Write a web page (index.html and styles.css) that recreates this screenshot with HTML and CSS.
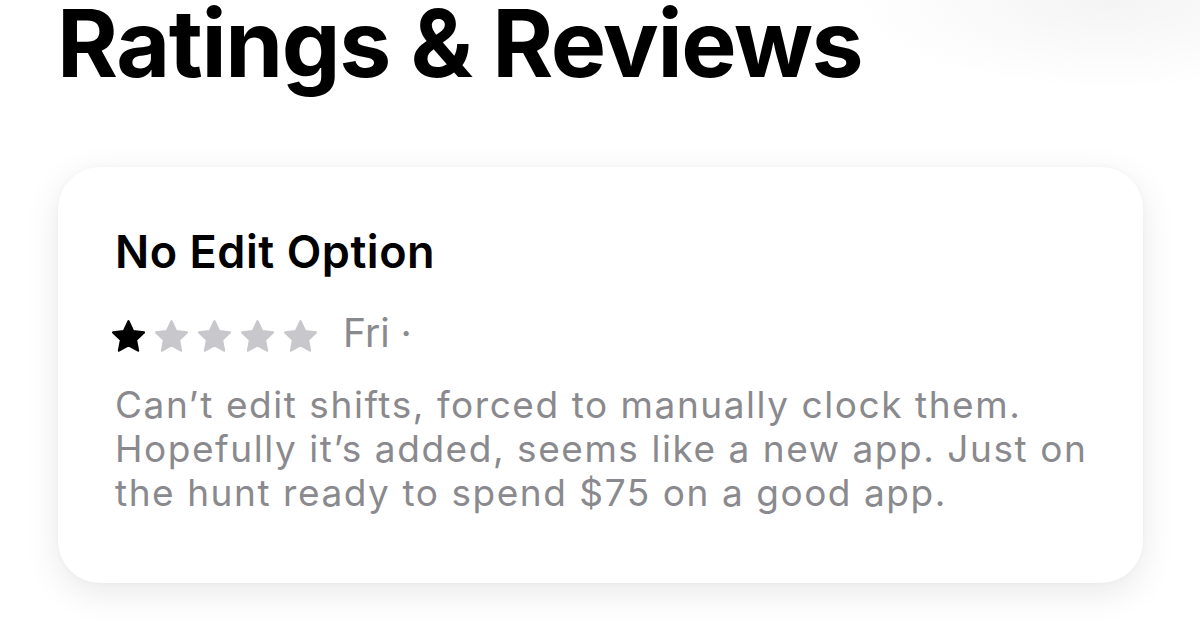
FILE: index.html
```html
<!DOCTYPE html>
<html lang="en">
<head>
<meta charset="utf-8">
<title>Ratings &amp; Reviews</title>
<link rel="stylesheet" href="styles.css">
</head>
<body>
<main class="page">
  <h1 class="heading">Ratings &amp; Reviews</h1>
  <section class="card">
    <h2 class="review-title">No Edit Option</h2>
    <div class="meta">
      <div class="stars">
        <svg class="star on" viewBox="1.9 1.9 20.2 19.4"><path d="M12 2.6l2.85 6.05 6.6.8-4.85 4.55 1.25 6.55L12 17.3l-5.85 3.25 1.25-6.55L2.55 9.45l6.6-.8z"/></svg>
        <svg class="star" viewBox="1.9 1.9 20.2 19.4"><path d="M12 2.6l2.85 6.05 6.6.8-4.85 4.55 1.25 6.55L12 17.3l-5.85 3.25 1.25-6.55L2.55 9.45l6.6-.8z"/></svg>
        <svg class="star" viewBox="1.9 1.9 20.2 19.4"><path d="M12 2.6l2.85 6.05 6.6.8-4.85 4.55 1.25 6.55L12 17.3l-5.85 3.25 1.25-6.55L2.55 9.45l6.6-.8z"/></svg>
        <svg class="star" viewBox="1.9 1.9 20.2 19.4"><path d="M12 2.6l2.85 6.05 6.6.8-4.85 4.55 1.25 6.55L12 17.3l-5.85 3.25 1.25-6.55L2.55 9.45l6.6-.8z"/></svg>
        <svg class="star" viewBox="1.9 1.9 20.2 19.4"><path d="M12 2.6l2.85 6.05 6.6.8-4.85 4.55 1.25 6.55L12 17.3l-5.85 3.25 1.25-6.55L2.55 9.45l6.6-.8z"/></svg>
      </div>
      <span class="date">Fri ·</span>
    </div>
    <p class="body">Can’t edit shifts, forced to manually clock them.<br>Hopefully it’s added, seems like a new app. Just on<br>the hunt ready to spend $75 on a good app.</p>
  </section>
</main>
</body>
</html>
```
FILE: styles.css
```css
html, body {
  margin: 0;
  padding: 0;
  background: #ffffff;
}
body {
  font-family: Inter, "Liberation Sans", sans-serif;
  color: #000;
}
.page {
  width: 1200px;
  height: 639px;
  overflow: hidden;
  padding-top: 1px;
  box-sizing: border-box;
  background: radial-gradient(ellipse 260px 90px at 1110px 0px, #f4f4f4, rgba(255,255,255,0));
}
.heading {
  margin: 0;
  padding-left: 57px;
  font-size: 93px;
  line-height: 84px;
  font-weight: 700;
  letter-spacing: -1.4px;
}
.card {
  margin: 82px 0 0 58px;
  width: 1085px;
  box-sizing: border-box;
  padding: 58px 30px 68px 57px;
  background: #fff;
  border-radius: 42px;
  box-shadow: 0 10px 36px rgba(0,0,0,0.09), 0 0 6px rgba(0,0,0,0.03);
}
.review-title {
  margin: 0;
  font-size: 45px;
  line-height: 54px;
  font-weight: 600;
  letter-spacing: 0.55px;
}
.meta {
  margin-top: 34px;
  display: flex;
  align-items: flex-start;
  height: 40px;
}
.stars {
  display: flex;
  gap: 10px;
  margin-top: 7px;
  margin-left: -3px;
}
.star {
  width: 33px;
  height: 32px;
  display: block;
}
.star path {
  fill: #c7c7cc;
  stroke: #c7c7cc;
  stroke-width: 1.4;
  stroke-linejoin: round;
}
.star.on path {
  fill: #000;
  stroke: #000;
}
.date {
  margin-left: 26px;
  font-size: 39px;
  line-height: 40px;
  color: #8a8a8e;
}
.body {
  margin: 30px 0 0;
  font-size: 37px;
  line-height: 44px;
  letter-spacing: 1.55px;
  color: #8a8a8e;
  white-space: nowrap;
}
```
